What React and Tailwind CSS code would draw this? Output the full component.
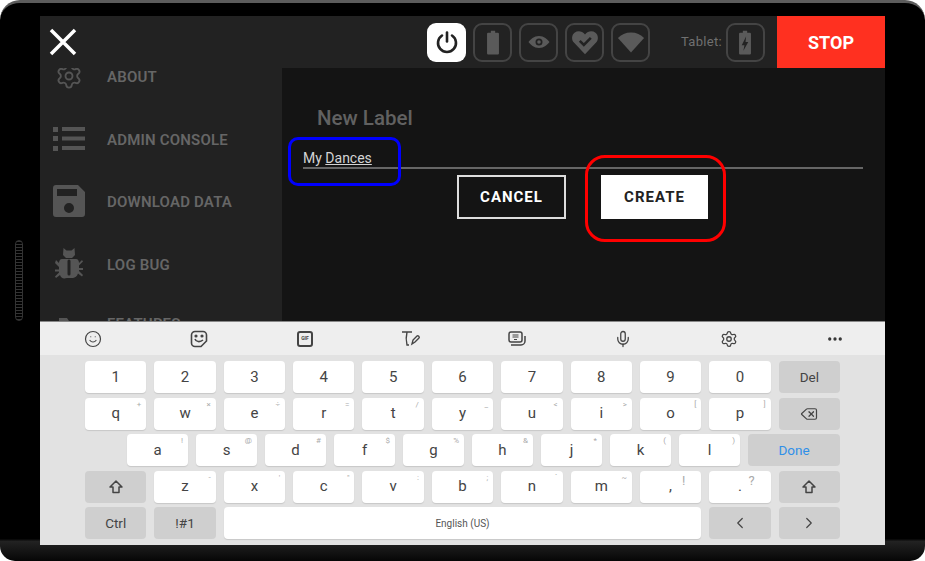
import React from "react";
import { ChevronLeft, ChevronRight, Delete, Ellipsis, Mic, Settings, Smile } from "lucide-react";

const barlow = "font-['Roboto','Liberation_Sans',sans-serif]";

// --- header icons ---
const PowerIcon = () => (
  <svg className="w-6 h-6" viewBox="0 0 24 24" fill="none" stroke="#222" strokeWidth="2.6" strokeLinecap="round">
    <path d="M12 2.5v9" />
    <path d="M7 5.5a9 9 0 1 0 10 0" />
  </svg>
);
const BatteryIcon = ({ bolt }) => (
  <svg className="w-[26px] h-[26px]" viewBox="0 0 24 24" fill="#5a5a5a">
    <path d="M10 1.500h4v2h2.500a1 1 0 0 1 1 1v18a1 1 0 0 1-1 1h-9a1 1 0 0 1-1-1v-18a1 1 0 0 1 1-1H10z" />
    {bolt && <path d="M13 7l-4 8h2.500l-1 5 4.500-8H12.500z" fill="#222" />}
  </svg>
);
const EyeIcon = () => (
  <svg className="w-6 h-6" viewBox="0 0 24 24" fill="#5a5a5a">
    <path fillRule="evenodd" d="M12 6c5 0 8.500 3.500 10.500 6-2 2.500-5.500 6-10.500 6S3.500 14.500 1.500 12C3.500 9.500 7 6 12 6zm0 2.500a3.500 3.500 0 1 0 0 7 3.500 3.500 0 0 0 0-7zm0 1.700a1.800 1.800 0 1 1 0 3.600 1.800 1.800 0 0 1 0-3.600z" />
  </svg>
);
const HeartIcon = () => (
  <svg className="w-7 h-7" viewBox="0 0 24 24">
    <path fill="#5a5a5a" d="M12 22.500 2.500 12.500C.2 10 .5 6 3 4c2.800-2 6.500-1.500 9 1.500C14.500 2.500 18.200 2 21 4c2.500 2 2.800 6 .5 8.500z" />
    <path d="M7.500 11l3.500 3.500 6-6" fill="none" stroke="#222" strokeWidth="2.200" />
  </svg>
);
const WedgeIcon = () => (
  <svg className="w-7 h-7" viewBox="0 0 24 24" fill="#5a5a5a">
    <path d="M12 21 .8 8.500C3.500 5.500 7.500 3.800 12 3.800s8.500 1.700 11.200 4.700z" />
  </svg>
);

const Tile = ({ children, active }) => (
  <div className={`w-[39px] h-[39px] rounded-[9px] flex items-center justify-center ${active ? "bg-white" : "border-2 border-[#444]"}`}>
    {children}
  </div>
);

// --- sidebar icons ---
const ListIcon = () => (
  <svg className="w-8 h-8" viewBox="0 0 32 26" fill="#555">
    <rect x="0" y="1" width="5" height="5" />
    <rect x="9" y="1" width="23" height="4" />
    <rect x="0" y="10" width="5" height="5" />
    <rect x="9" y="10.500" width="23" height="4" />
    <rect x="0" y="20" width="5" height="5" />
    <rect x="9" y="20" width="23" height="4" />
  </svg>
);
const DiskIcon = () => (
  <svg className="w-8 h-8" viewBox="0 0 32 32">
    <path fill="#555" fillRule="evenodd" d="M3 0h22l7 7v22a3 3 0 0 1-3 3H3a3 3 0 0 1-3-3V3a3 3 0 0 1 3-3zm1 4v7h20V4zm12 14a5 5 0 1 0 0 10 5 5 0 0 0 0-10z" />
  </svg>
);
const BugIcon = () => (
  <svg className="w-[28px] h-[32px]" viewBox="0 0 28 32">
    <path fill="#555" d="M8.500 0l3 2.500h5l3-2.500 .5 7-3 3h-6l-3-3z" />
    <path fill="#555" d="M7 11h14c2 0 3 2 3 4l3-3 1 1.500-4 4v2.500h4v2h-4v1l4 4-1 1.500-4-3c-1 3-3 4-5 4.500h-6C8 31 6 30 5 27l-4 3-1-1.500 4-4v-1H0v-2h4v-2.500l-4-4L1 12l3 3c0-2 1-4 3-4z" />
    <path d="M14 13v13" stroke="#222" strokeWidth="3" strokeLinecap="round" />
  </svg>
);
const FolderIcon = () => (
  <svg className="w-[22px] h-[22px]" viewBox="0 0 22 22" fill="#555">
    <path d="M1 3h8l2 3h10v14H1z" />
  </svg>
);

const menu = [
  { label: "ABOUT", icon: <Settings size={28} strokeWidth={1.6} color="#555" />, nudge: "translate-y-[1px]" },
  { label: "ADMIN CONSOLE", icon: <ListIcon />, nudge: "translate-y-[1px]" },
  { label: "DOWNLOAD DATA", icon: <DiskIcon />, nudge: "translate-y-[1px]" },
  { label: "LOG BUG", icon: <BugIcon />, nudge: "translate-y-[1px]" },
  { label: "FEATURES", icon: <FolderIcon />, nudge: "-translate-y-[2px]" },
];

// --- keyboard ---
const ShiftIcon = () => (
  <svg className="w-4 h-4" viewBox="0 0 16 16" fill="none" stroke="#444" strokeWidth="1.500" strokeLinejoin="round">
    <path d="M8 2 2 8h3v5.500h6V8h3z" />
  </svg>
);
const StickerIcon = () => (
  <svg className="w-[18px] h-[18px]" viewBox="0 0 18 18" fill="none" stroke="#444" strokeWidth="1.600">
    <path d="M11 16.500H5a3.500 3.500 0 0 1-3.500-3.500V5A3.500 3.500 0 0 1 5 1.500h8A3.500 3.500 0 0 1 16.500 5v6z" />
    <path d="M5 9c1 3 5 3.500 8 1" />
    <circle cx="6" cy="6" r=".8" fill="#444" />
    <circle cx="12" cy="6" r=".8" fill="#444" />
  </svg>
);
const GifIcon = () => (
  <div className="w-4 h-4 rounded-[3px] border-2 border-[#444] flex items-center justify-center text-[5px] font-bold text-[#444] leading-none">
    GIF
  </div>
);
const HandwriteIcon = () => (
  <svg className="w-5 h-5" viewBox="0 0 20 20" fill="none" stroke="#444" strokeWidth="1.400">
    <path d="M1 3h10M6 3c-1 4-1 9 0 13h2" />
    <path d="M11 15l1-4 4-4c1-1 3 1 2 2l-4 4z" />
  </svg>
);
const ClipboardIcon = () => (
  <svg className="w-[18px] h-[18px]" viewBox="0 0 18 18" fill="none" stroke="#444" strokeWidth="1.500">
    <rect x="1" y="2" width="13" height="10" rx="2" />
    <path d="M4.500 5h6M4.500 7h6M6 9.500h3" strokeWidth="1" />
    <path d="M3 15h10a4 4 0 0 0 4-4V6" />
  </svg>
);

const keyBase = "h-[32px] rounded-[4px] flex items-center justify-center relative";
const Key = ({ k, hint, big, className = "" }) => (
  <div className={`${keyBase} bg-white shadow-[0_1px_1px_rgba(0,0,0,0.12)] text-[15px] text-[#444] ${className}`}>
    {k}
    {hint && (
      <span className={`absolute leading-[12px] text-[#aaa] ${big ? "text-[13px] top-[4px] right-[16px]" : "text-[8px] top-[1px] right-[5px]"}`}>
        {hint}
      </span>
    )}
  </div>
);
const FnKey = ({ children, className = "text-[#444]" }) => (
  <div className={`${keyBase} bg-[#cfcfcf] text-[13.500px] ${className}`}>{children}</div>
);

const row1 = "1234567890".split("");
const row2 = [["q", "+"], ["w", "×"], ["e", "÷"], ["r", "="], ["t", "/"], ["y", "_"], ["u", "<"], ["i", ">"], ["o", "["], ["p", "]"]];
const row3 = [["a", "!"], ["s", "@"], ["d", "#"], ["f", "$"], ["g", "%"], ["h", "&"], ["j", "*"], ["k", "("], ["l", ")"]];
const row4 = [["z", "-"], ["x", "'"], ["c", '"'], ["v", ":"], ["b", ";"], ["n", "`"], ["m", "~"]];

export default function App() {
  return (
    <div className={`w-[925px] h-[561px] bg-white relative overflow-hidden ${barlow}`}>
      {/* tablet body */}
      <div className="w-full h-full rounded-t-[20px] rounded-b-[15px] bg-[linear-gradient(to_bottom,#000_96%,#222_96.500%,#060606_100%)] border-t-[3px] border-[#5c5c5c] pt-[13px] px-[40px] pb-[16px] flex">
        <div className="flex-1 flex flex-col overflow-hidden">
          {/* top bar */}
          <header className="h-[52px] shrink-0 bg-[#222] flex items-center pl-[9px] relative z-10">
            <svg className="w-[28px] h-[28px]" viewBox="0 0 28 28" stroke="#fff" strokeWidth="3.500">
              <path d="M2 2l24 24M26 2 2 26" />
            </svg>
            <div className="ml-[350px] flex gap-[7px]">
              <Tile active><PowerIcon /></Tile>
              <Tile><BatteryIcon /></Tile>
              <Tile><EyeIcon /></Tile>
              <Tile><HeartIcon /></Tile>
              <Tile><WedgeIcon /></Tile>
            </div>
            <span className="ml-[31px] mr-[4px] text-[13px] text-[#707070] tracking-[0.3px]">Tablet:</span>
            <Tile><BatteryIcon bolt /></Tile>
            <div className="ml-auto w-[108px] h-full bg-[#ff3020] flex items-center justify-center text-white text-[18px] font-bold">
              STOP
            </div>
          </header>

          <div className="flex-1 flex min-h-0">
            {/* side menu */}
            <aside className="w-[242px] shrink-0 bg-[#222] overflow-hidden">
              <div className="-mt-[23px]">
                {menu.map((m) => (
                  <div key={m.label} className="h-[62.500px] flex items-center">
                    <div className="w-[32px] ml-[13px] flex justify-center">{m.icon}</div>
                    <span className={`ml-[22px] text-[15px] font-semibold text-[#666] tracking-[0.200px] ${m.nudge}`}>{m.label}</span>
                  </div>
                ))}
              </div>
            </aside>

            {/* new label form */}
            <main className="flex-1 bg-[#141414] pl-[21px] pr-[22px] pt-[36px]">
              <h2 className="ml-[14px] text-[20.500px] leading-[28px] font-medium text-[#616161]">New Label</h2>
              <div className="mt-[15px] h-[22px] border-b-2 border-[#666] text-[14px] leading-[22px] text-[#d4d4d4]">
                My <span className="underline">Dances</span>
              </div>
              <div className="mt-[6px] ml-[154px] flex gap-[35px]">
                <button className="w-[109px] h-[44px] border-2 border-[#ddd] text-white text-[15px] font-bold tracking-[1px]">CANCEL</button>
                <button className="w-[107px] h-[44px] bg-white text-[#222] text-[15px] font-bold tracking-[1px]">CREATE</button>
              </div>
            </main>
          </div>

          {/* on-screen keyboard */}
          <div className="h-[224px] shrink-0 bg-[#e2e2e2] border-t border-[#888]">
            <div className="h-[33px] bg-[#eeeeee] grid grid-cols-[repeat(8,106px)] items-center justify-items-center">
              <Smile size={18} strokeWidth={1.6} color="#444" />
              <StickerIcon />
              <GifIcon />
              <HandwriteIcon />
              <ClipboardIcon />
              <Mic size={18} strokeWidth={1.7} color="#444" />
              <Settings size={18} strokeWidth={1.7} color="#444" />
              <Ellipsis size={18} strokeWidth={2.400} color="#333" />
            </div>
            <div className="pl-[45px] pr-[45px] pt-[6px] flex flex-col gap-[4.500px]">
              <div className="grid grid-cols-11 gap-x-2">
                {row1.map((k) => <Key key={k} k={k} />)}
                <FnKey>Del</FnKey>
              </div>
              <div className="grid grid-cols-11 gap-x-2">
                {row2.map(([k, h]) => <Key key={k} k={k} hint={h} />)}
                <FnKey><Delete size={18} strokeWidth={1.6} /></FnKey>
              </div>
              <div className="flex gap-x-2 pl-[42px]">
                {row3.map(([k, h]) => <Key key={k} k={k} hint={h} className="w-[61px]" />)}
                <FnKey className="flex-1 text-[#2f8fe8]">Done</FnKey>
              </div>
              <div className="grid grid-cols-11 gap-x-2">
                <FnKey><ShiftIcon /></FnKey>
                {row4.map(([k, h]) => <Key key={k} k={k} hint={h} />)}
                <Key k="," hint="!" big />
                <Key k="." hint="?" big />
                <FnKey><ShiftIcon /></FnKey>
              </div>
              <div className="grid grid-cols-11 gap-x-2">
                <FnKey>Ctrl</FnKey>
                <FnKey>!#1</FnKey>
                <div className={`${keyBase} col-span-7 bg-white shadow-[0_1px_1px_rgba(0,0,0,0.12)] text-[10px] text-[#555]`}>English (US)</div>
                <FnKey><ChevronLeft size={18} strokeWidth={1.6} /></FnKey>
                <FnKey><ChevronRight size={18} strokeWidth={1.6} /></FnKey>
              </div>
            </div>
          </div>
        </div>
      </div>

      {/* side button on the bezel */}
      <div className="absolute left-[15px] top-[240px] w-[8px] h-[81px] rounded-full border border-[#333] bg-[repeating-linear-gradient(to_bottom,#333_0,#333_1px,#000_1px,#000_3px)]" />

      {/* annotation outlines */}
      <div className="absolute left-[288px] top-[137px] w-[113px] h-[49px] rounded-[10px] border-[3px] border-[#0000ff]" />
      <div className="absolute left-[585px] top-[155px] w-[141px] h-[87px] rounded-[20px] border-[3px] border-[#ff0000]" />
    </div>
  );
}
